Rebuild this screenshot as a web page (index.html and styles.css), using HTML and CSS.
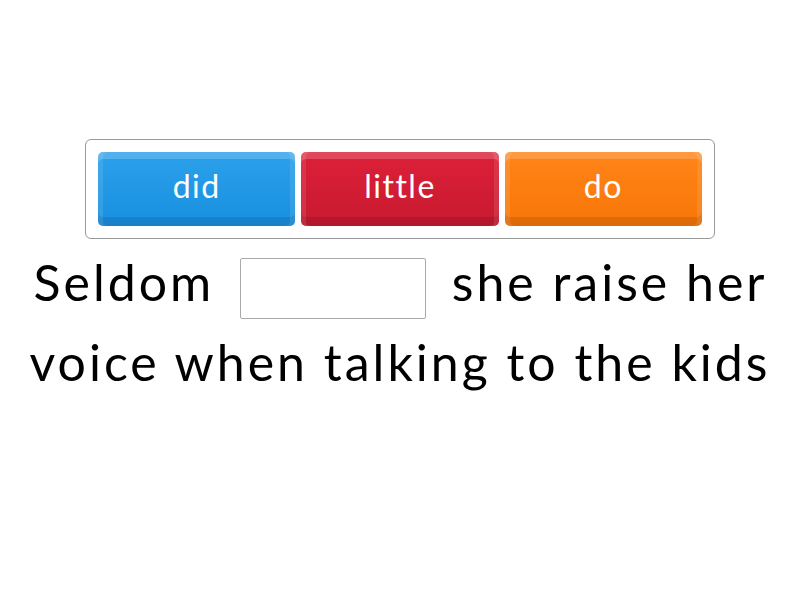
FILE: index.html
```html
<!DOCTYPE html>
<html lang="en">
<head>
    <meta charset="UTF-8">
    <title>Missing word</title>
    <link rel="stylesheet" href="styles.css">
</head>
<body>
    <div class="quiz">
        <div class="word-bank">
            <div class="tile tile-blue">did</div>
            <div class="tile tile-red">little</div>
            <div class="tile tile-orange">do</div>
        </div>
        <p class="sentence">
            <span>Seldom</span>
            <span class="gap"></span>
            <span>she raise her</span>
            <span>voice when talking to the kids</span>
        </p>
    </div>
</body>
</html>
```

FILE: styles.css
```css
body {
    margin: 0;
    background: #fff;
    font-family: Lato, "Open Sans", sans-serif;
    color: #000;
}

.quiz {
    width: 800px;
    padding-top: 139px;
}

.word-bank {
    width: 604px;
    margin: 0 auto;
    padding: 12px;
    border: 1px solid #999;
    border-radius: 6px;
    display: flex;
    gap: 6px;
}

.tile {
    flex: 1;
    height: 74px;
    border-radius: 5px;
    display: flex;
    align-items: center;
    justify-content: center;
    padding-bottom: 8px;
    box-sizing: border-box;
    color: #fff;
    font-size: 32px;
    letter-spacing: 1.5px;
    box-shadow:
        inset 0 7px 0 rgba(255, 255, 255, 0.18),
        inset 5px 0 0 rgba(255, 255, 255, 0.1),
        inset -5px 0 0 rgba(255, 255, 255, 0.1),
        inset 0 -9px 0 rgba(0, 0, 0, 0.1);
}

.tile-blue {
    background: linear-gradient(#2ca0ea, #1890e0);
}

.tile-red {
    background: linear-gradient(#dc2038, #c81a30);
}

.tile-orange {
    background: linear-gradient(#ff8418, #f87608);
}

.sentence {
    margin: 3px 0 0;
    padding: 0 10px;
    text-align: center;
    font-size: 50px;
    line-height: 80px;
    letter-spacing: 3px;
}

.gap {
    display: inline-block;
    width: 184px;
    height: 59px;
    margin: 0 10px;
    vertical-align: middle;
    border: 1px solid #aaa;
    border-radius: 2px;
}
```
